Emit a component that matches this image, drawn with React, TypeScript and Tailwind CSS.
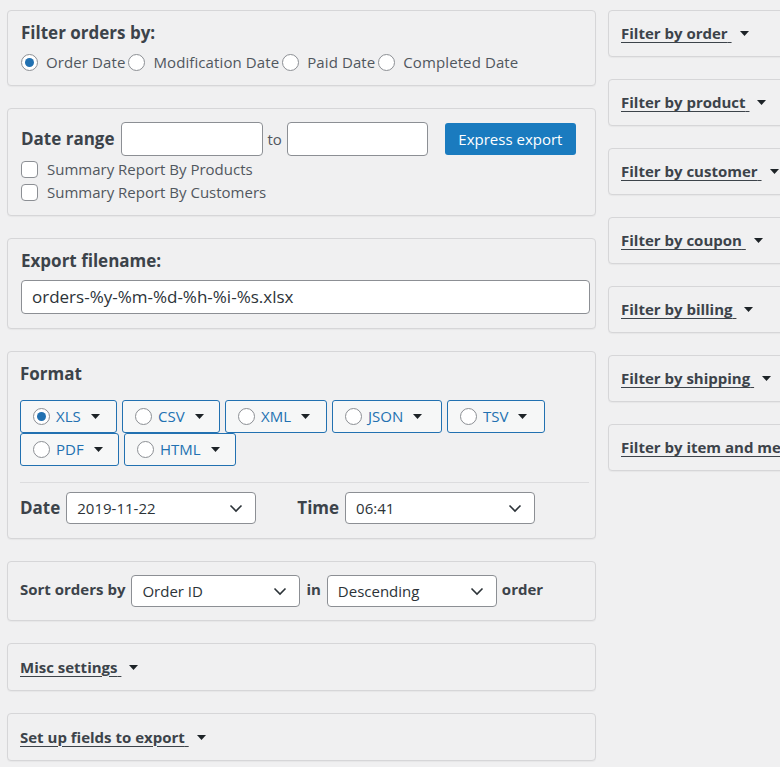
import type { ReactNode } from 'react'

// Export orders — settings screen (left: main options, right: collapsible filters)

const FONT = "font-['Open_Sans','Noto_Sans',sans-serif]"

function Panel({ className = '', children }: { className?: string; children: ReactNode }) {
  return (
    <div
      className={`rounded-[4px] border border-[#d6d6d8] bg-[#f0f0f1] shadow-[0_1px_1px_rgba(0,0,0,0.04)] ${className}`}
    >
      {children}
    </div>
  )
}

function Caret() {
  return (
    <svg width="9" height="5" viewBox="0 0 9 5" className="shrink-0">
      <path d="M0 0h9L4.5 5z" fill="#1d2327" />
    </svg>
  )
}

function Chevron() {
  return (
    <svg width="14" height="9" viewBox="0 0 14 9" className="shrink-0">
      <path d="M1.5 1.5l5.5 5.5 5.5-5.5" fill="none" stroke="#2c3338" strokeWidth="1.6" />
    </svg>
  )
}

function Radio({ checked = false }: { checked?: boolean }) {
  return (
    <span className="flex h-[17px] w-[17px] shrink-0 items-center justify-center rounded-full border border-[#8c8f94] bg-white">
      {checked && <span className="h-[9px] w-[9px] rounded-full bg-[#2271b1]" />}
    </span>
  )
}

function Checkbox() {
  return <span className="h-[17px] w-[17px] shrink-0 rounded-[4px] border border-[#8c8f94] bg-white" />
}

function Select({ value, width }: { value: string; width: string }) {
  return (
    <div
      className={`flex h-[32px] shrink-0 items-center justify-between rounded-[4px] border border-[#8c8f94] bg-white pl-[10px] pr-[12px] text-[15px] text-[#2c3338] ${width}`}
    >
      <span>{value}</span>
      <Chevron />
    </div>
  )
}

function Toggle({ label }: { label: string }) {
  return (
    <div className="flex items-center gap-[8px] whitespace-nowrap">
      <span className="text-[15px] font-bold text-[#3c434a] underline decoration-1 underline-offset-[3px]">
        {label}&nbsp;
      </span>
      <Caret />
    </div>
  )
}

const formats = [
  { name: 'XLS', w: 'w-[97px]', checked: true },
  { name: 'CSV', w: 'w-[98px]' },
  { name: 'XML', w: 'w-[102px]' },
  { name: 'JSON', w: 'w-[110px]' },
  { name: 'TSV', w: 'w-[98px]' },
  { name: 'PDF', w: 'w-[99px]' },
  { name: 'HTML', w: 'w-[112px]' },
]

const dateTypes = ['Order Date', 'Modification Date', 'Paid Date', 'Completed Date']

const rightFilters = [
  'Filter by order',
  'Filter by product',
  'Filter by customer',
  'Filter by coupon',
  'Filter by billing',
  'Filter by shipping',
  'Filter by item and metadata',
]

export default function App() {
  return (
    <div
      className={`flex h-[767px] w-[780px] gap-[12px] overflow-hidden bg-[#f0f0f1] pl-[7px] pt-[10px] ${FONT}`}
    >
      {/* main column */}
      <div className="flex w-[589px] shrink-0 flex-col gap-[22px]">
        <Panel className="px-[13px] pb-[13px] pt-[11px]">
          <div className="text-[17px] font-bold leading-[22px] text-[#3c434a]">Filter orders by:</div>
          <div className="mt-[8px] flex h-[20px] items-center text-[15px] text-[#50575e]">
            {dateTypes.map((d, i) => (
              <span key={d} className="flex items-center">
                <Radio checked={i === 0} />
                <span className="ml-[8px] mr-[3px] tracking-[0.1px]">{d}</span>
              </span>
            ))}
          </div>
        </Panel>

        <Panel className="px-[13px] pb-[11px] pt-[13px]">
          <div className="flex h-[34px] items-center">
            <span className="text-[17px] font-bold text-[#3c434a]">Date range</span>
            <span className="ml-[6px] h-[34px] w-[142px] rounded-[4px] border border-[#8c8f94] bg-white" />
            <span className="mx-[5px] text-[15px] text-[#50575e]">to</span>
            <span className="h-[34px] w-[141px] rounded-[4px] border border-[#8c8f94] bg-white" />
            <button className="ml-[17px] flex h-[32px] w-[131px] items-center justify-center rounded-[3px] bg-[#1a7bbf] text-[15px] text-white">
              Express export
            </button>
          </div>
          <div className="mt-[2px] flex flex-col text-[15px] text-[#50575e]">
            <label className="flex h-[23px] items-center gap-[9px]">
              <Checkbox />
              Summary Report By Products
            </label>
            <label className="flex h-[23px] items-center gap-[9px]">
              <Checkbox />
              Summary Report By Customers
            </label>
          </div>
        </Panel>

        <Panel className="pb-[14px] pl-[13px] pr-[5px] pt-[11px]">
          <div className="text-[17px] font-bold leading-[22px] text-[#3c434a]">Export filename:</div>
          <div className="mt-[8px] flex h-[34px] items-center rounded-[4px] border border-[#8c8f94] bg-white px-[10px] text-[17px] text-[#2c3338]">
            orders-%y-%m-%d-%h-%i-%s.xlsx
          </div>
        </Panel>

        <Panel className="pb-[14px] pl-[12px] pr-[5px] pt-[11px]">
          <div className="text-[17px] font-bold leading-[22px] text-[#3c434a]">Format</div>
          <div className="mt-[15px] flex flex-wrap gap-x-[5px]">
            {formats.map((f) => (
              <div
                key={f.name}
                className={`flex h-[33px] items-center rounded-[3px] border border-[#2271b1] bg-[#f6f7f7] pl-[12px] text-[15px] text-[#2271b1] ${f.w}`}
              >
                <Radio checked={f.checked} />
                <span className="ml-[6px] mr-[10px]">{f.name}</span>
                <Caret />
              </div>
            ))}
          </div>
          <div className="mr-[1px] mt-[16px] border-t border-[#dcdcde]" />
          <div className="mt-[9px] flex items-center">
            <span className="text-[17px] font-bold text-[#3c434a]">Date</span>
            <span className="ml-[6px]">
              <Select value="2019-11-22" width="w-[190px]" />
            </span>
            <span className="ml-[41px] text-[17px] font-bold text-[#3c434a]">Time</span>
            <span className="ml-[6px]">
              <Select value="06:41" width="w-[190px]" />
            </span>
          </div>
        </Panel>

        <Panel className="px-[12px] pb-[13px] pt-[13px]">
          <div className="flex items-center">
            <span className="mr-[6px] -mt-[3px] text-[15px] font-bold text-[#3c434a]">Sort orders by</span>
            <Select value="Order ID" width="w-[169px]" />
            <span className="mx-[6px] -mt-[3px] text-[15px] font-bold text-[#3c434a]">in</span>
            <Select value="Descending" width="w-[170px]" />
            <span className="ml-[5px] -mt-[3px] text-[15px] font-bold text-[#3c434a]">order</span>
          </div>
        </Panel>

        <Panel className="flex h-[48px] items-center px-[12px]">
          <Toggle label="Misc settings" />
        </Panel>

        <Panel className="flex h-[48px] items-center px-[12px]">
          <Toggle label="Set up fields to export" />
        </Panel>
      </div>

      {/* filters column */}
      <div className="flex w-[230px] shrink-0 flex-col gap-[22px]">
        {rightFilters.map((f) => (
          <Panel key={f} className="flex h-[47px] items-center px-[12px]">
            <Toggle label={f} />
          </Panel>
        ))}
      </div>
    </div>
  )
}
